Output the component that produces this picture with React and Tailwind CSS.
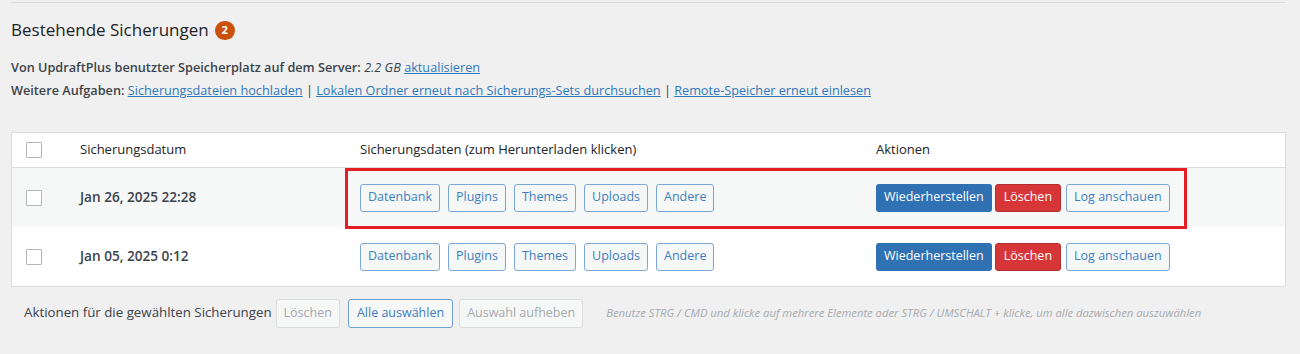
import React from "react";

const files = ["Datenbank", "Plugins", "Themes", "Uploads", "Andere"];

const backups = [
  { date: "Jan 26, 2025 22:28", shaded: true },
  { date: "Jan 05, 2025 0:12", shaded: false },
];

function Checkbox() {
  return <div className="w-4 h-4 border border-[#b3b6ba] bg-white rounded-[1px]" />;
}

function OutlineButton({ children }) {
  return (
    <button className="h-7 px-[7px] rounded-[3px] border border-[#7aa6d8] bg-[#f6f7f7] text-[#3f7fc1] text-[12.5px] leading-none">
      {children}
    </button>
  );
}

function BackupRow({ backup }) {
  return (
    <div
      className={`grid grid-cols-[68px_280px_516px_1fr] items-center h-[59px] ${backup.shaded ? "bg-[#f6f7f7]" : "bg-white"}`}
    >
      <div className="pl-[14px]">
        <Checkbox />
      </div>
      <div className="font-semibold text-[13.6px] text-[#3c434a]">{backup.date}</div>
      <div className="flex gap-[8px]">
        {files.map((f) => (
          <OutlineButton key={f}>{f}</OutlineButton>
        ))}
      </div>
      <div className="flex items-center">
        <button className="h-7 px-[8px] rounded-[3px] bg-[#3071b3] text-white text-[12.5px] leading-none">
          Wiederherstellen
        </button>
        <button className="ml-[3px] h-7 px-[8px] rounded-[3px] bg-[#d63638] border border-[#b32d2e] text-white text-[12.5px] leading-none">
          Löschen
        </button>
        <div className="ml-[5px]">
          <OutlineButton>Log anschauen</OutlineButton>
        </div>
      </div>
    </div>
  );
}

export default function App() {
  return (
    <div className="min-h-screen bg-[#f0f0f1] font-['Open_Sans',sans-serif] text-[#3c434a] px-[11px] pr-[14px]">
      <div className="pt-[2px]">
        <div className="h-px bg-[#dcdcde]" />
      </div>

      <div className="flex items-center gap-[6px] mt-[15px]">
        <h2 className="text-[17px] font-medium text-[#1d2327] leading-6">Bestehende Sicherungen</h2>
        <span className="w-5 h-[19px] rounded-full bg-[#c9510c] text-white text-[11px] font-bold flex items-center justify-center">
          2
        </span>
      </div>

      <div className="mt-[14px] text-[12.7px] leading-[23px]">
        <p>
          <span className="font-semibold">Von UpdraftPlus benutzter Speicherplatz auf dem Server:</span>{" "}
          <em>2.2 GB</em>{" "}
          <a className="text-[#2f78bd] underline">aktualisieren</a>
        </p>
        <p>
          <span className="font-semibold">Weitere Aufgaben:</span>{" "}
          <a className="text-[#2f78bd] underline">Sicherungsdateien hochladen</a> |{" "}
          <a className="text-[#2f78bd] underline">Lokalen Ordner erneut nach Sicherungs-Sets durchsuchen</a> |{" "}
          <a className="text-[#2f78bd] underline">Remote-Speicher erneut einlesen</a>
        </p>
      </div>

      <div className="relative mt-[30px] border border-[#dcdcde] bg-white">
        <div className="grid grid-cols-[68px_280px_516px_1fr] items-center h-[35px] border-b border-[#dcdcde] text-[13px] text-[#1d2327]">
          <div className="pl-[14px]">
            <Checkbox />
          </div>
          <div>Sicherungsdatum</div>
          <div>Sicherungsdaten (zum Herunterladen klicken)</div>
          <div>Aktionen</div>
        </div>
        {backups.map((b) => (
          <BackupRow key={b.date} backup={b} />
        ))}
        <div className="absolute left-[333px] top-[35px] w-[842px] h-[61px] border-[3px] border-[#e31e24] pointer-events-none" />
      </div>

      <div className="flex items-center h-[30px] mt-[11px] pl-[13px]">
        <span className="text-[13.3px] text-[#3c434a]">Aktionen für die gewählten Sicherungen</span>
        <button className="ml-[4px] h-[29px] px-[7px] rounded-[3px] border border-[#dcdcde] bg-[#f6f7f7] text-[#a7aaad] text-[12.5px] leading-none">
          Löschen
        </button>
        <button className="ml-[8px] h-[29px] px-[8px] rounded-[3px] border border-[#6fa0d6] bg-[#f6f7f7] text-[#3f7fc1] text-[12.5px] leading-none">
          Alle auswählen
        </button>
        <button className="ml-[6px] h-[29px] px-[7px] rounded-[3px] border border-[#dcdcde] bg-[#f6f7f7] text-[#a7aaad] text-[12.5px] leading-none">
          Auswahl aufheben
        </button>
        <em className="ml-[23px] text-[11.25px] text-[#a7aaad]">
          Benutze STRG / CMD und klicke auf mehrere Elemente oder STRG / UMSCHALT + klicke, um alle dazwischen auszuwählen
        </em>
      </div>
    </div>
  );
}
